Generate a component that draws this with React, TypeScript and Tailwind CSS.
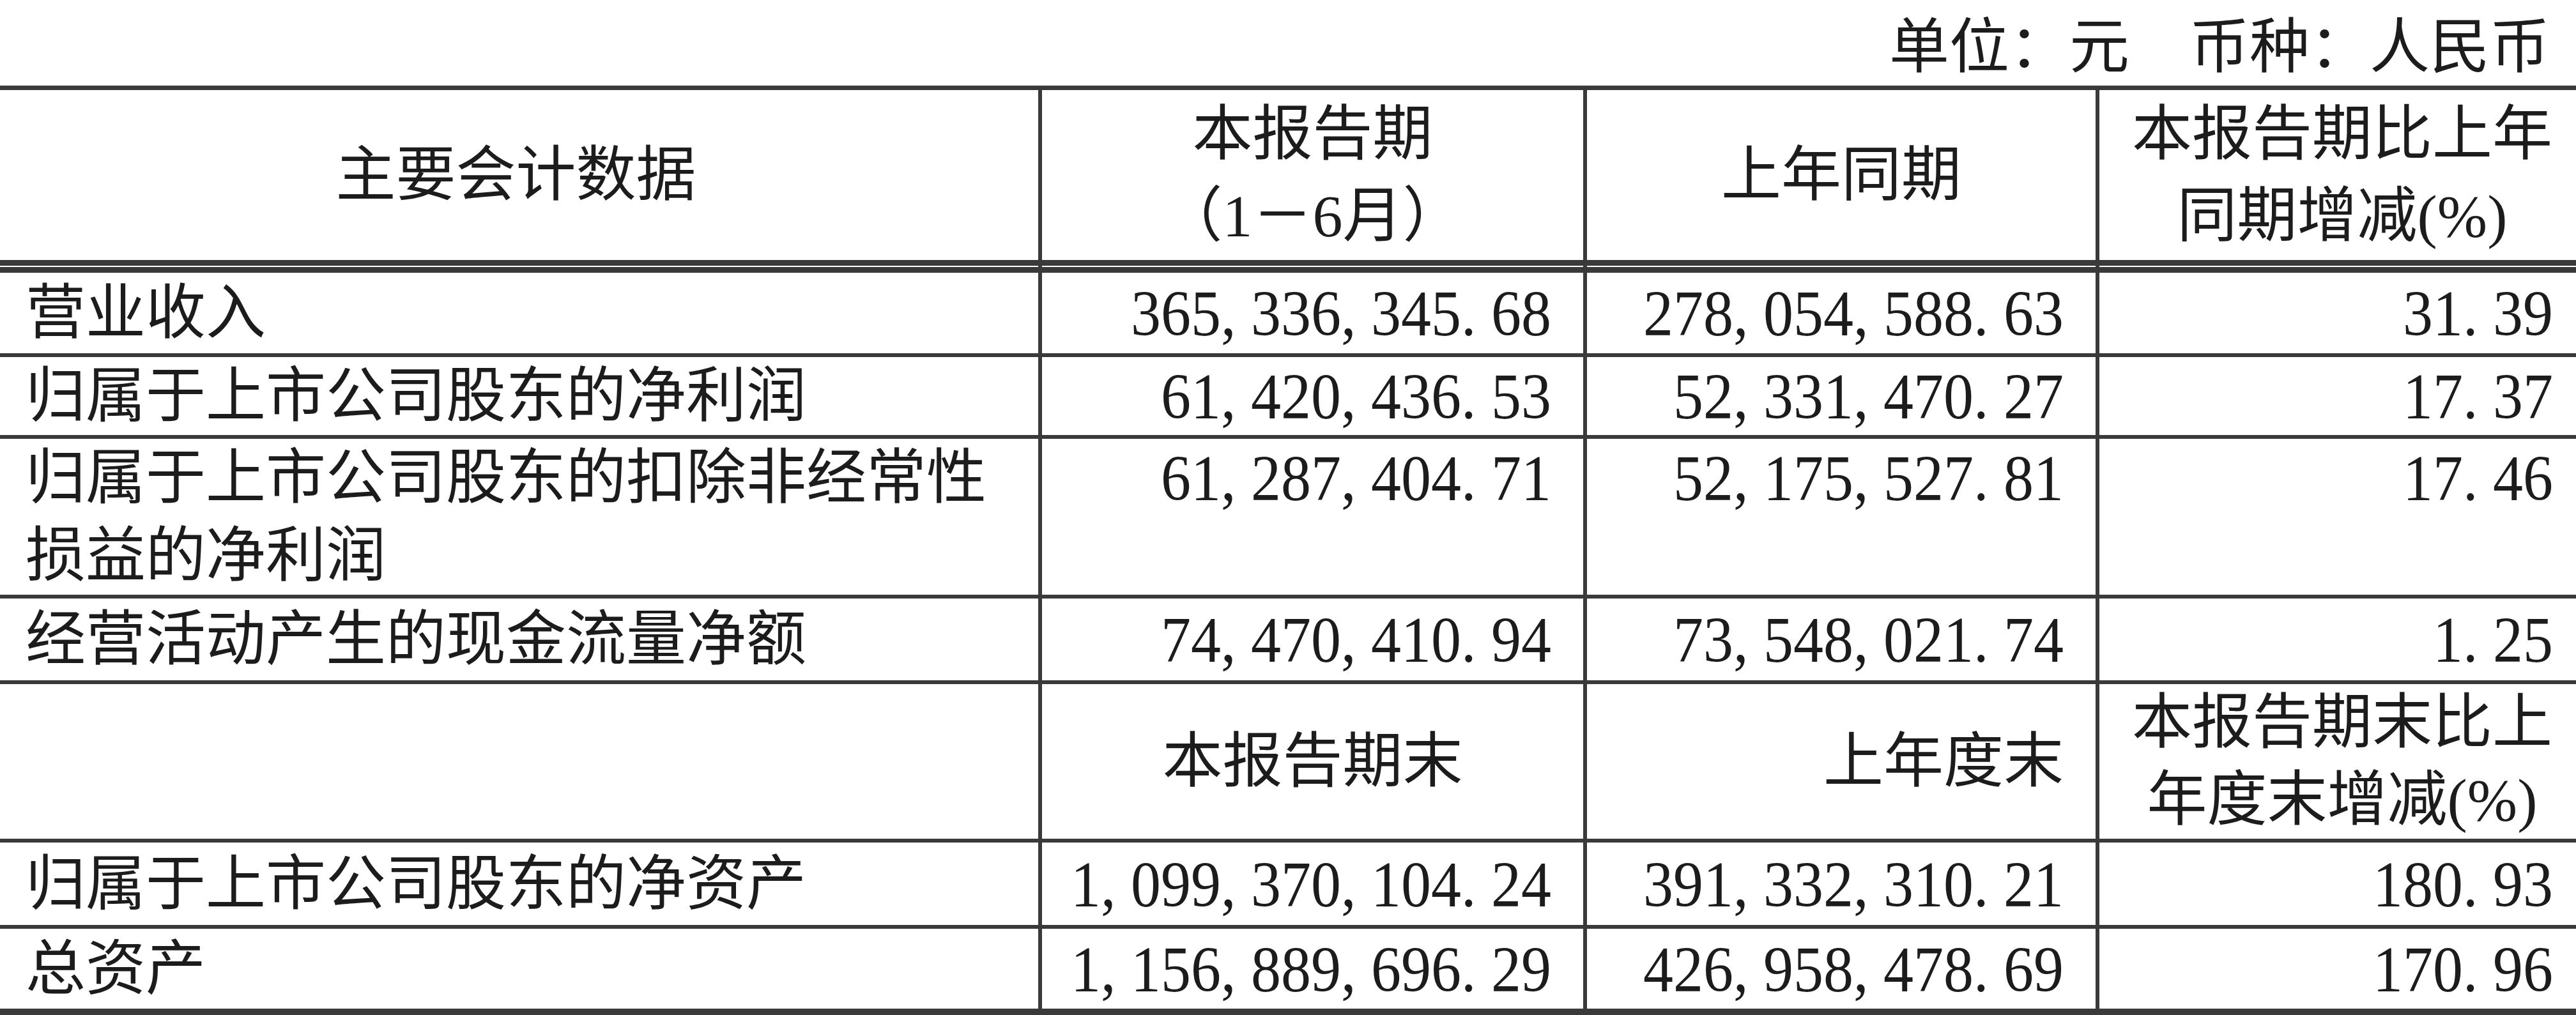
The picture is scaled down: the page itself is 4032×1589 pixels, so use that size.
import React from 'react'

type Row = {
  label: string[]
  cur: string
  prev: string
  pct: string
  h: string
}

// heights are border-box: content + bottom rule
const rows: Row[] = [
  { label: ['营业收入'], cur: '365,336,345.68', prev: '278,054,588.63', pct: '31.39', h: 'h-[132px]' },
  { label: ['归属于上市公司股东的净利润'], cur: '61,420,436.53', prev: '52,331,470.27', pct: '17.37', h: 'h-[128px]' },
  {
    label: ['归属于上市公司股东的扣除非经常性', '损益的净利润'],
    cur: '61,287,404.71',
    prev: '52,175,527.81',
    pct: '17.46',
    h: 'h-[250px]',
  },
  { label: ['经营活动产生的现金流量净额'], cur: '74,470,410.94', prev: '73,548,021.74', pct: '1.25', h: 'h-[134px]' },
]

const rows2: Row[] = [
  { label: ['归属于上市公司股东的净资产'], cur: '1,099,370,104.24', prev: '391,332,310.21', pct: '180.93', h: 'h-[135px]' },
  { label: ['总资产'], cur: '1,156,889,696.29', prev: '426,958,478.69', pct: '170.96', h: 'h-[135px]' },
]

// SimSun style: comma and period take a half-em cell like the digits
function Num({ v }: { v: string }) {
  return (
    <span className="inline-block scale-y-[1.08]">
      {v.split('').map((c, i) =>
        c === ',' || c === '.' ? (
          <span key={i} className="inline-block w-[0.5em]">
            {c}
          </span>
        ) : (
          <React.Fragment key={i}>{c}</React.Fragment>
        )
      )}
    </span>
  )
}

function DataRow({ row, last }: { row: Row; last?: boolean }) {
  const multi = row.label.length > 1
  const align = multi ? 'items-start leading-[122px]' : 'items-center leading-[120px]'
  return (
    <div
      className={`grid grid-cols-[1635px_853px_802px_766px] border-[#3a3a3a] ${
        last ? 'border-b-[10px]' : 'border-b-[6px]'
      } ${row.h}`}
    >
      <div className={`px-[50px] flex ${align}`}>
        <div className="whitespace-nowrap">
          {row.label.map((l, i) => (
            <div key={i}>{l}</div>
          ))}
        </div>
      </div>
      <div className={`border-l-[6px] border-[#3a3a3a] px-[50px] flex justify-end whitespace-nowrap ${align}`}>
        <Num v={row.cur} />
      </div>
      <div className={`border-l-[6px] border-[#3a3a3a] px-[50px] flex justify-end whitespace-nowrap ${align}`}>
        <Num v={row.prev} />
      </div>
      <div className={`border-l-[6px] border-[#3a3a3a] px-[50px] flex justify-end whitespace-nowrap ${align}`}>
        <Num v={row.pct} />
      </div>
    </div>
  )
}

export default function App() {
  return (
    <div className="w-full min-h-[1589px] overflow-hidden bg-white text-[#1c1c1c] text-[94px] font-['Liberation_Serif','Noto_Sans_CJK_SC',serif]">
      {/* unit / currency caption */}
      <div className="h-[134px] flex items-end justify-end pr-[41px] leading-[120px] whitespace-nowrap">
        单位：元　币种：人民币
      </div>

      <div className="ml-[-10px] w-[4056px] border-t-[7px] border-[#3a3a3a]">
        {/* header */}
        <div className="grid grid-cols-[1635px_853px_802px_766px] h-[275px] border-b-[9px] border-[#3a3a3a] text-center leading-[128px]">
          <div className="flex items-center justify-center">主要会计数据</div>
          <div className="border-l-[6px] border-[#3a3a3a] flex items-center justify-center whitespace-nowrap">
            <div>
              本报告期
              <br />
              （1－6月）
            </div>
          </div>
          <div className="border-l-[6px] border-[#3a3a3a] flex items-center justify-center">上年同期</div>
          <div className="border-l-[6px] border-[#3a3a3a] flex items-center justify-center whitespace-nowrap">
            <div>
              本报告期比上年
              <br />
              同期增减(%)
            </div>
          </div>
        </div>
        <div className="grid grid-cols-[1635px_853px_802px_766px] h-[2px]">
          <div />
          <div className="border-l-[6px] border-[#3a3a3a]" />
          <div className="border-l-[6px] border-[#3a3a3a]" />
          <div className="border-l-[6px] border-[#3a3a3a]" />
        </div>
        <div className="border-t-[9px] border-[#3a3a3a]">
          {rows.map((r, i) => (
            <DataRow key={i} row={r} />
          ))}

          {/* period-end sub header */}
          <div className="grid grid-cols-[1635px_853px_802px_766px] h-[248px] border-b-[6px] border-[#3a3a3a]">
            <div />
            <div className="border-l-[6px] border-[#3a3a3a] flex items-center justify-center leading-[120px]">
              本报告期末
            </div>
            <div className="border-l-[6px] border-[#3a3a3a] flex items-center justify-end px-[50px] leading-[120px]">
              上年度末
            </div>
            <div className="border-l-[6px] border-[#3a3a3a] flex items-center justify-center text-center leading-[121px] whitespace-nowrap">
              <div>
                本报告期末比上
                <br />
                年度末增减(%)
              </div>
            </div>
          </div>

          {rows2.map((r, i) => (
            <DataRow key={i} row={r} last={i === rows2.length - 1} />
          ))}
        </div>
      </div>
    </div>
  )
}
